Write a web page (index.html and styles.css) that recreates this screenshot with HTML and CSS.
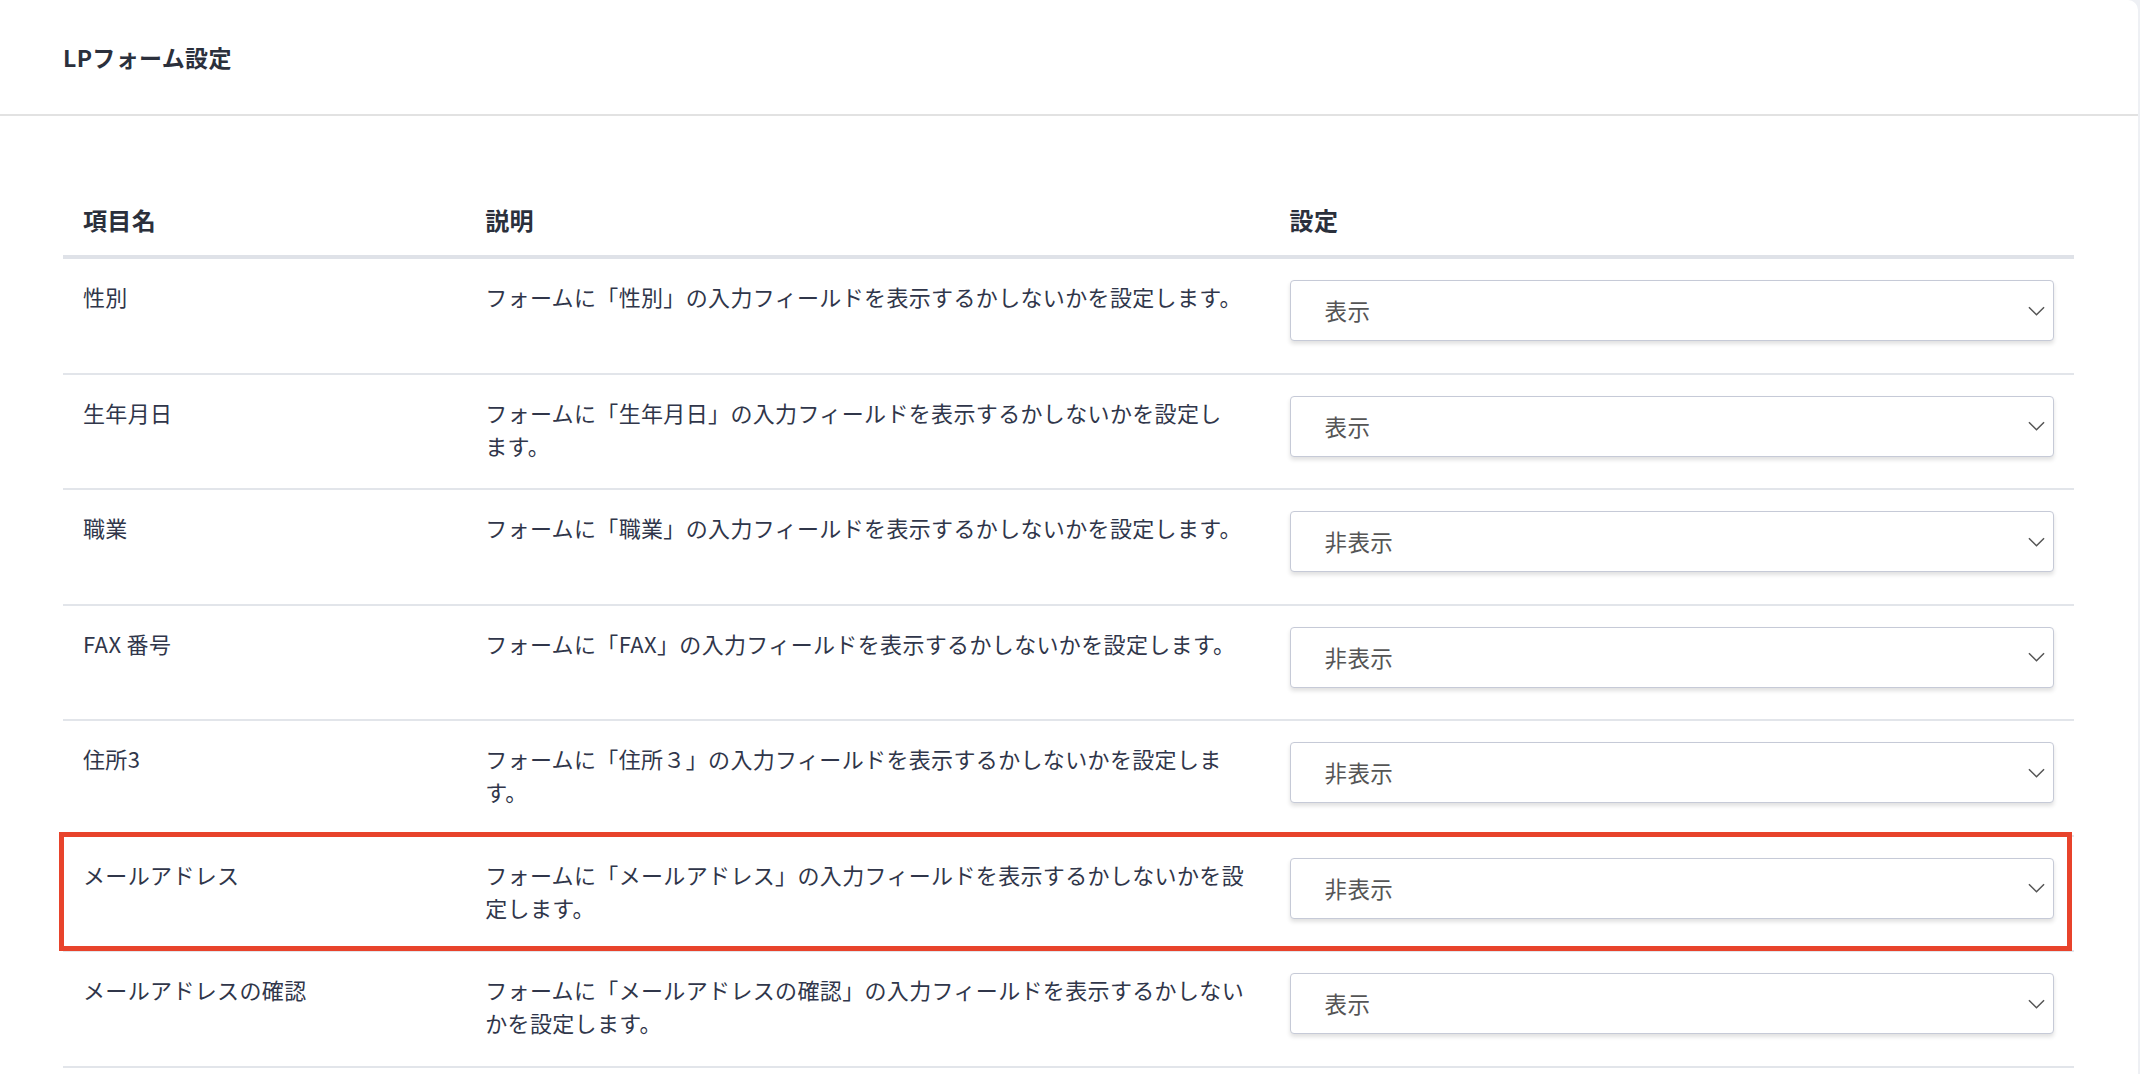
FILE: index.html
```html
<!DOCTYPE html>
<html lang="ja">
<head>
  <meta charset="UTF-8" />
  <title>LPフォーム設定</title>
  <link rel="stylesheet" href="styles.css">
</head>
<body>

  <div class="card">
    <div class="card-header">LPフォーム設定</div>

    <div class="card-body">
      <table class="settings">
        <colgroup>
          <col class="col-name">
          <col class="col-desc">
          <col class="col-value">
        </colgroup>
        <thead>
          <tr>
            <th>項目名</th>
            <th>説明</th>
            <th>設定</th>
          </tr>
        </thead>
        <tbody>
          <tr>
            <td>性別</td>
            <td>フォームに「性別」の入力フィールドを表示するかしないかを設定します。</td>
            <td><div class="select"><span>表示</span><svg viewBox="0 0 18 10"><path d="M1 1l8 8 8-8"/></svg></div></td>
          </tr>
          <tr>
            <td>生年月日</td>
            <td>フォームに「生年月日」の入力フィールドを表示するかしないかを設定し<br>ます。</td>
            <td><div class="select"><span>表示</span><svg viewBox="0 0 18 10"><path d="M1 1l8 8 8-8"/></svg></div></td>
          </tr>
          <tr>
            <td>職業</td>
            <td>フォームに「職業」の入力フィールドを表示するかしないかを設定します。</td>
            <td><div class="select"><span>非表示</span><svg viewBox="0 0 18 10"><path d="M1 1l8 8 8-8"/></svg></div></td>
          </tr>
          <tr>
            <td>FAX 番号</td>
            <td>フォームに「FAX」の入力フィールドを表示するかしないかを設定します。</td>
            <td><div class="select"><span>非表示</span><svg viewBox="0 0 18 10"><path d="M1 1l8 8 8-8"/></svg></div></td>
          </tr>
          <tr>
            <td>住所3</td>
            <td>フォームに「住所３」の入力フィールドを表示するかしないかを設定します。</td>
            <td><div class="select"><span>非表示</span><svg viewBox="0 0 18 10"><path d="M1 1l8 8 8-8"/></svg></div></td>
          </tr>
          <tr class="highlight">
            <td>メールアドレス</td>
            <td>フォームに「メールアドレス」の入力フィールドを表示するかしないかを設定します。</td>
            <td><div class="select"><span>非表示</span><svg viewBox="0 0 18 10"><path d="M1 1l8 8 8-8"/></svg></div></td>
          </tr>
          <tr>
            <td>メールアドレスの確認</td>
            <td>フォームに「メールアドレスの確認」の入力フィールドを表示するかしないかを設定します。</td>
            <td><div class="select"><span>表示</span><svg viewBox="0 0 18 10"><path d="M1 1l8 8 8-8"/></svg></div></td>
          </tr>
        </tbody>
      </table>
    </div>
  </div>

</body>
</html>
```

FILE: styles.css
```css
* { margin: 0; padding: 0; box-sizing: border-box; }
body {
  font-family: "Noto Sans CJK JP", "Noto Sans", sans-serif;
  background: #eef0f4;
  color: #30364a;
  font-size: 22px;
  line-height: 33px;
  letter-spacing: 0.35px;
  overflow: hidden;
}
.card {
  background: #fff;
  margin-right: 2px;
  min-height: 100vh;
  border-radius: 0 10px 0 0;
}
.card-header {
  height: 116px;
  padding: 0 63px;
  display: flex;
  align-items: center;
  font-weight: bold;
  font-size: 23px;
  color: #2b303c;
  border-bottom: 2px solid #e2e2e2;
}
.card-body {
  padding: 67px 64px 0 63px;
}
.settings {
  width: 100%;
  border-collapse: collapse;
  table-layout: fixed;
}
.col-name { width: 20%; }
.col-desc { width: 40%; }
.col-value { width: 40%; }
.settings th {
  text-align: left;
  font-weight: bold;
  font-size: 24px;
  color: #2b303c;
  padding: 20px 20px 19px;
  border-bottom: 4px solid #dfe2e8;
}
.settings td {
  vertical-align: top;
  padding: 21px 20px 21.5px;
}
.settings tbody tr {
  border-bottom: 2px solid #e2e5ea;
}
.settings tr.highlight {
  position: relative;
}
.settings tr.highlight::after {
  content: "";
  position: absolute;
  top: -4px;
  bottom: -2px;
  left: -4px;
  right: 2px;
  border: 5px solid #e8432b;
  pointer-events: none;
}
.select {
  height: 61px;
  margin-bottom: 10px;
  display: flex;
  align-items: center;
  justify-content: space-between;
  padding: 0 8px 0 34px;
  border: 1.5px solid #c6cad7;
  border-radius: 4px;
  box-shadow: 0 3px 4px rgba(0, 0, 0, 0.12);
  color: #555;
  font-size: 22.5px;
  background: #fff;
}
.select svg {
  width: 17px;
  height: 10px;
  fill: none;
  stroke: #555;
  stroke-width: 1.6;
}
```
